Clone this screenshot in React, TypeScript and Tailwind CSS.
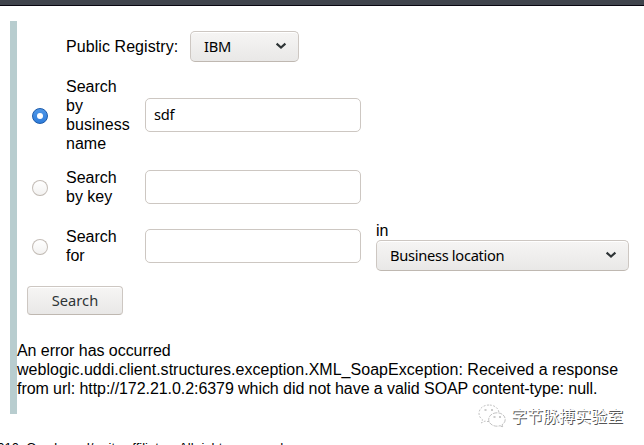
import type { ReactNode } from 'react';

const uiFont = "font-['Noto_Sans','Open_Sans',sans-serif]";

function Chevron() {
  return (
    <svg width="12" height="8" viewBox="0 0 12 8" fill="none" className="mb-px shrink-0">
      <path d="M1.6 1.6 L6 5.6 L10.4 1.6" stroke="#2e3436" strokeWidth="2.1" />
    </svg>
  );
}

function Select({ label, className }: { label: string; className: string }) {
  return (
    <button
      type="button"
      className={`flex h-[31px] items-center justify-between rounded-[5px] border border-[#cdc7c2] border-b-[#bfb8b1] bg-linear-to-b from-[#f6f5f4] to-[#e9e8e7] pr-[11px] pl-[13px] text-[14.67px] tracking-[-0.3px] text-black shadow-[inset_0_1px_#fff] ${uiFont} ${className}`}
    >
      <span className="whitespace-nowrap">{label}</span>
      <Chevron />
    </button>
  );
}

function Radio({ checked = false }: { checked?: boolean }) {
  return (
    <span
      role="radio"
      aria-checked={checked}
      className={`flex size-4 items-center justify-center rounded-full border ${
        checked
          ? 'border-[#1b5aab] bg-linear-to-b from-[#4e97e8] to-[#2f7ddb]'
          : 'border-[#c4bdb7] border-b-[#bfb8b1] bg-linear-to-b from-white to-[#f3f2f1]'
      }`}
    >
      {checked && <span className="size-1.5 rounded-full bg-white" />}
    </span>
  );
}

function Row({ checked, label, value = '', className, children }: {
  checked?: boolean;
  label: ReactNode;
  value?: string;
  className: string;
  children?: ReactNode;
}) {
  return (
    <div className={`flex items-center ${className}`}>
      <div className="w-[34px] shrink-0 pt-0.5">
        <Radio checked={checked} />
      </div>
      <div className="w-[79px] shrink-0">{label}</div>
      <input
        readOnly
        value={value}
        className={`h-[34px] w-[216px] shrink-0 rounded-[5px] border border-[#cdc7c2] bg-white px-2 pb-0.5 text-[14.67px] tracking-[-0.3px] text-black outline-none ${uiFont}`}
      />
      {children}
    </div>
  );
}

export default function App() {
  return (
    <div className="relative h-[445px] w-[644px] overflow-hidden bg-white font-['Liberation_Sans',Arial,sans-serif] text-[16px] leading-[19px] text-black">
      <div className="h-1.5 border-b border-[#080510] bg-[#40444d]" />
      <main className="mt-[15px] ml-[10px] h-[393px] border-l-[7px] border-[#b8cdcf] pt-[10px]">
        <div className="flex h-[31px] items-center pl-[49px]">
          <span className="w-[124px] tracking-[0.07px]">Public Registry:</span>
          <Select label="IBM" className="w-[109px]" />
        </div>
        <div className="pl-[15px]">
          <Row checked label={<>Search<br />by<br /><span className="tracking-[0.1px]">business</span><br />name</>} value="sdf" className="mt-[15px] h-[76px]" />
          <Row label={<>Search<br />by key</>} className="mt-[15px] h-[38px]" />
          <Row label={<>Search<br />for</>} className="mt-[15px] h-[50px]">
            <div className="ml-[15px]">
              <div>in</div>
              <Select label="Business location" className="w-[253px]" />
            </div>
          </Row>
        </div>
        <button
          type="button"
          className={`mt-[15px] ml-[10px] block h-[29px] w-24 rounded-[4px] border border-[#cdc7c2] border-b-[#bfb8b1] bg-linear-to-b from-[#f6f5f4] to-[#e9e8e7] text-[14.67px] text-[#2e3436] shadow-[inset_0_1px_#fff] ${uiFont}`}
        >
          Search
        </button>
        <p className="mt-[26px] whitespace-nowrap">
          <span className="tracking-[-0.05px]">An error has occurred</span>
          <br />
          <span className="tracking-[0.02px]">
            weblogic.uddi.client.structures.exception.XML_SoapException: Received a response
          </span>
          <br />
          <span className="tracking-[-0.065px]">
            from url: http://172.21.0.2:6379 which did not have a valid SOAP content-type: null.
          </span>
        </p>
      </main>
      <footer className="mt-[26px] -ml-[10px] text-[13px] leading-4 whitespace-nowrap">
        2010, Oracle and/or its affiliates. All rights reserved.
      </footer>
      <div className="absolute top-[403px] left-[478px] flex items-center">
        <svg width="28" height="24" viewBox="0 0 28 24" fill="#fff" stroke="#999" strokeWidth="0.6">
          <path d="M11 1C5 1 1 4.800 1 9.300c0 2.700 1.300 4.900 3.500 6.400L3.500 19l3.500-2c1.300.4 2.600.6 4 .6C17 17.600 21 13.800 21 9.300S17 1 11 1Z" strokeDasharray="2 1.500" />
          <path d="M19 8.800c-4.700 0-8.300 3-8.300 6.700s3.600 6.700 8.300 6.700c1.100 0 2.200-.2 3.100-.5l2.700 1.500-.8-2.400c2-1.300 3.200-3.200 3.200-5.300 0-3.700-3.500-6.700-8.200-6.700Z" strokeDasharray="4 1" />
          <path d="M6.500 6h2M13 6h2M15.500 13h2M21 13h2" stroke="#555" />
        </svg>
        <span className="mb-0.5 ml-[5px] font-['Noto_Sans_CJK_SC',sans-serif] text-[16px] leading-6 whitespace-nowrap text-white [text-shadow:1px_1px_0_#555]">
          字节脉搏实验室
        </span>
      </div>
    </div>
  );
}
